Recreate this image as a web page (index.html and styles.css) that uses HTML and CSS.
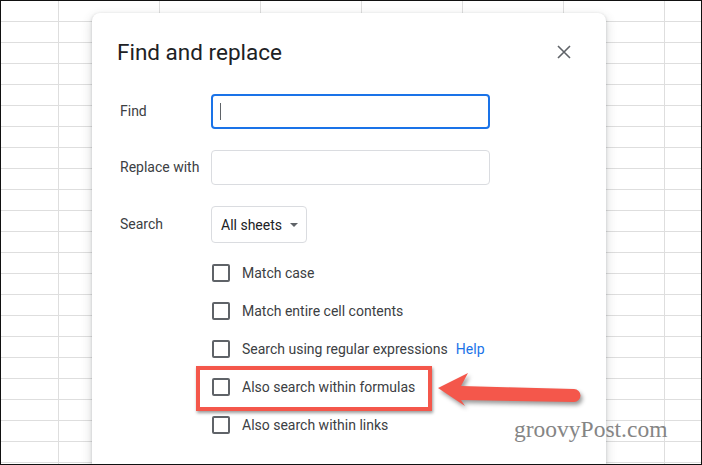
FILE: index.html
```html
<!DOCTYPE html>
<html lang="en">
<head>
  <meta charset="UTF-8" />
  <title>Find and replace</title>
  <link rel="stylesheet" href="styles.css">
</head>
<body>
  <div class="page">
    <div class="dialog">
      <div class="dialog-head">
        <h1 class="title">Find and replace</h1>
        <button class="close" aria-label="Close">
          <svg width="14" height="14" viewBox="0 0 14 14">
            <path d="M1 1 L13 13 M13 1 L1 13" stroke="#5f6368" stroke-width="1.6" fill="none" />
          </svg>
        </button>
      </div>

      <div class="form">
        <label class="label">Find</label>
        <div class="field field-focus"><span class="caret"></span></div>

        <label class="label">Replace with</label>
        <div class="field"></div>

        <label class="label">Search</label>
        <div><div class="select">All sheets <span class="tri"></span></div></div>
      </div>

      <ul class="options">
        <li><span class="box"></span>Match case</li>
        <li><span class="box"></span>Match entire cell contents</li>
        <li><span class="box"></span>Search using regular expressions <a class="help" href="#">Help</a></li>
        <li><span class="box"></span>Also search within formulas</li>
        <li><span class="box"></span>Also search within links</li>
      </ul>
    </div>

    <!-- annotation on top of the screenshot -->
    <div class="highlight"></div>
    <svg class="arrow" width="160" height="50" viewBox="0 0 160 50">
      <path d="M7 22 L37 7 L30 20 L143 23 A6.5 6.5 0 0 1 143 36 L30 34 L34 40 Z" fill="#f4574b" />
    </svg>
    <div class="watermark">groovyPost.com</div>
  </div>
</body>
</html>
```

FILE: styles.css
```css
body {
  margin: 0;
  font-family: Roboto, "Liberation Sans", Arial, sans-serif;
}
.page {
  position: relative;
  width: 702px;
  height: 465px;
  box-sizing: border-box;
  border: 1px solid #111;
  overflow: hidden;
  background-color: #fff;
  background-image:
    linear-gradient(to right, #dedede 1px, transparent 1px),
    linear-gradient(to bottom, #dedede 1px, transparent 1px);
  background-size: 101px 100%, 100% 21px;
  background-position: 57px 0, 0 20px;
}
.dialog {
  position: absolute;
  left: 91px;
  top: 12px;
  width: 514px;
  height: 480px;
  box-sizing: border-box;
  padding: 25px 30px 0 25px;
  background: #fff;
  border-radius: 8px;
  box-shadow: 0 4px 10px 2px rgba(60, 64, 67, 0.15), 0 1px 3px rgba(60, 64, 67, 0.25);
}
.dialog-head {
  display: flex;
  align-items: center;
  justify-content: space-between;
}
.title {
  margin: 0;
  font-size: 22.5px;
  font-weight: 400;
  line-height: 28px;
  color: #202124;
}
.close {
  width: 24px;
  height: 24px;
  padding: 0;
  border: 0;
  background: none;
  display: flex;
  align-items: center;
  justify-content: center;
}
.form {
  margin-top: 28px;
  display: grid;
  grid-template-columns: 94px 279px;
  row-gap: 21px;
  align-items: center;
}
.label {
  padding-left: 3px;
  padding-bottom: 2px;
  font-size: 14px;
  color: #3c4043;
}
.field {
  height: 35px;
  box-sizing: border-box;
  border: 1px solid #dadce0;
  border-radius: 4px;
  display: flex;
  align-items: center;
}
.field-focus {
  border: 2px solid #1a73e8;
  padding-left: 7px;
}
.caret {
  width: 1px;
  height: 17px;
  background: #5f6368;
}
.select {
  display: inline-flex;
  align-items: center;
  gap: 8px;
  height: 37px;
  box-sizing: border-box;
  padding: 0 8px 0 9px;
  border: 1px solid #dadce0;
  border-radius: 4px;
  font-size: 14px;
  color: #202124;
}
.tri {
  width: 0;
  height: 0;
  border-left: 4px solid transparent;
  border-right: 4px solid transparent;
  border-top: 4px solid #5f6368;
}
.options {
  list-style: none;
  margin: 11px 0 0 95px;
  padding: 0;
}
.options li {
  height: 38px;
  display: flex;
  align-items: center;
  gap: 12px;
  font-size: 14px;
  color: #3c4043;
}
.box {
  width: 18px;
  height: 18px;
  box-sizing: border-box;
  border: 2px solid #5f6368;
  border-radius: 2px;
}
.help {
  margin-left: -4px;
  color: #1a73e8;
  text-decoration: none;
}
.highlight {
  position: absolute;
  left: 195px;
  top: 365px;
  width: 236px;
  height: 45px;
  box-sizing: border-box;
  border: 4px solid #f4574b;
  box-shadow: 1px 2px 3px rgba(0, 0, 0, 0.4);
}
.arrow {
  position: absolute;
  left: 430px;
  top: 365px;
  filter: drop-shadow(2px 3px 2px rgba(0, 0, 0, 0.4));
}
.watermark {
  position: absolute;
  left: 513px;
  top: 417px;
  font-family: "Liberation Serif", "Times New Roman", serif;
  font-size: 23.5px;
  line-height: 1;
  color: #858585;
}
```
